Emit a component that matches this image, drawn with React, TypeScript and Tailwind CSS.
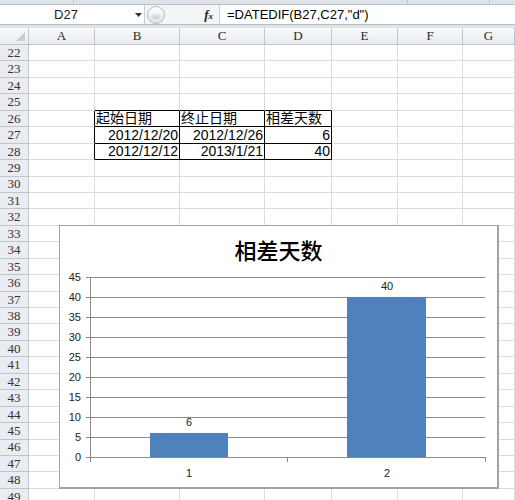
import React from "react";

const cols = [
  { key: "A", w: "w-[66px]" },
  { key: "B", w: "w-[85px]" },
  { key: "C", w: "w-[85px]" },
  { key: "D", w: "w-[67px]" },
  { key: "E", w: "w-[66px]" },
  { key: "F", w: "w-[65px]" },
  { key: "G", w: "flex-1" },
];

const rows = Array.from({ length: 28 }, (_, i) => 22 + i);

const cells: Record<string, { text: string; align: "left" | "right" }> = {
  B26: { text: "起始日期", align: "left" },
  C26: { text: "终止日期", align: "left" },
  D26: { text: "相差天数", align: "left" },
  B27: { text: "2012/12/20", align: "right" },
  C27: { text: "2012/12/26", align: "right" },
  D27: { text: "6", align: "right" },
  B28: { text: "2012/12/12", align: "right" },
  C28: { text: "2013/1/21", align: "right" },
  D28: { text: "40", align: "right" },
};

const inTable = (c: string, r: number) => ["B", "C", "D"].includes(c) && r >= 26 && r <= 28;

const FormulaBar: React.FC = () => (
  <div className="bg-[#dfe3e8]">
    <div className="h-[5px] flex border-b border-[#b8bec6]">
      <div className="w-[74px] border-r border-[#c3c8ce]" />
      <div className="w-[334px] border-r border-[#c3c8ce]" />
      <div className="w-[82px] border-r border-[#c3c8ce]" />
    </div>
    <div className="h-[20px] flex items-center bg-white border-b border-[#b8bec6]">
      <div className="w-[132px] text-center text-[13px] text-[#1e1e1e]">D27</div>
      <div className="w-[12px] flex justify-center">
        <svg width="7" height="4" viewBox="0 0 7 4">
          <path d="M0 0 H7 L3.5 4 Z" fill="#333" />
        </svg>
      </div>
      <div className="w-[75px] h-full flex items-center bg-[#f4f5f7] border-l border-[#c9cdd2] relative">
        <div className="ml-[2px] w-[18px] h-[18px] rounded-full border border-[#b3b8be] bg-gradient-to-b from-white to-[#dde1e6] flex items-center justify-center">
          <div className="w-[8px] h-[8px] rounded-full bg-gradient-to-b from-white to-[#c7ccd2]" />
        </div>
        <span className="ml-auto mr-[6px] italic text-[13px] text-[#222] font-['Liberation_Serif',serif] font-bold">
          f<span className="text-[9px]">x</span>
        </span>
      </div>
      <div className="flex-1 h-full flex items-center border-l border-[#c9cdd2] pl-[7px] text-[13px] text-black">
        =DATEDIF(B27,C27,"d")
      </div>
    </div>
    <div className="h-[3px]" />
  </div>
);

const Chart: React.FC = () => {
  const y = (v: number) => 232 - v * 4;
  const ticks = [0, 5, 10, 15, 20, 25, 30, 35, 40, 45];
  return (
    <div className="absolute left-[59px] top-[225px] w-[440px] h-[264px] bg-white border border-[#a3a3a3] border-r-2 border-b-2">
      <div className="absolute left-0 right-0 top-[8px] text-center text-[22px] leading-[30px] text-black font-['Noto_Sans_CJK_SC',sans-serif] font-medium">
        相差天数
      </div>
      <svg className="absolute left-[-1px] top-[-1px]" width="440" height="264" viewBox="0 0 440 264">
        {ticks.map((t) => (
          <g key={t}>
            {t > 0 && <line x1="31" x2="426" y1={y(t) + 0.5} y2={y(t) + 0.5} stroke="#8c8c8c" strokeWidth="1" />}
            <line x1="27" x2="31" y1={y(t) + 0.5} y2={y(t) + 0.5} stroke="#8c8c8c" strokeWidth="1" />
            <text x="22" y={y(t) + 4} textAnchor="end" fontSize="11" fontFamily="Liberation Sans, sans-serif" fill="#222">
              {t}
            </text>
          </g>
        ))}
        <line x1="31.5" x2="31.5" y1="52" y2="233" stroke="#8c8c8c" />
        <line x1="31" x2="427" y1="232.5" y2="232.5" stroke="#8c8c8c" />
        {[31.5, 228.5, 426.5].map((x) => (
          <line key={x} x1={x} x2={x} y1="232" y2="237" stroke="#8c8c8c" />
        ))}
        <rect x="91" y={y(6)} width="78" height={6 * 4} fill="#4f81bd" />
        <rect x="288" y={y(40)} width="79" height={40 * 4} fill="#4f81bd" />
        <text x="130" y="201" textAnchor="middle" fontSize="11" fontFamily="Liberation Sans, sans-serif" fill="#222">6</text>
        <text x="328" y="65" textAnchor="middle" fontSize="11" fontFamily="Liberation Sans, sans-serif" fill="#222">40</text>
        <text x="130" y="252" textAnchor="middle" fontSize="11" fontFamily="Liberation Sans, sans-serif" fill="#222">1</text>
        <text x="328" y="252" textAnchor="middle" fontSize="11" fontFamily="Liberation Sans, sans-serif" fill="#222">2</text>
      </svg>
    </div>
  );
};

const App: React.FC = () => {
  return (
    <div className="w-[515px] h-[500px] overflow-hidden bg-white relative font-['Liberation_Sans','Noto_Sans_CJK_SC',sans-serif]">
      <FormulaBar />
      {/* column headers */}
      <div className="flex h-[17px] bg-gradient-to-b from-[#f9fafb] to-[#e8ebef] border-b border-[#c0c5cc]">
        <div className="w-[29px] border-r border-[#c0c5cc] relative">
          <svg className="absolute right-[3px] bottom-[3px]" width="9" height="9" viewBox="0 0 9 9">
            <path d="M9 0 V9 H0 Z" fill="#c9ced4" />
          </svg>
        </div>
        {cols.map((c) => (
          <div
            key={c.key}
            className={`${c.w} shrink-0 border-r border-[#c0c5cc] flex items-center justify-center text-[13px] text-[#2b2b2b] font-['Liberation_Serif',serif]`}
          >
            {c.key}
          </div>
        ))}
      </div>
      {/* rows */}
      {rows.map((r) => (
        <div key={r} className="flex h-[16.44px]">
          <div className="w-[29px] shrink-0 bg-[#e9ecf0] border-r border-b border-[#c0c5cc] flex items-center justify-center text-[13px] text-[#333] font-['Liberation_Serif',serif]">
            {r}
          </div>
          {cols.map((c) => {
            const id = `${c.key}${r}`;
            const cell = cells[id];
            const black =
              inTable(c.key, r) ||
              (c.key === "A" && r >= 26 && r <= 28);
            const blackBottom = inTable(c.key, r) || (["B", "C", "D"].includes(c.key) && r === 25);
            return (
              <div
                key={id}
                className={`${c.w} shrink-0 border-r border-b ${black ? "border-r-black" : "border-r-[#dadcdf]"} ${
                  blackBottom ? "border-b-black" : "border-b-[#dadcdf]"
                } flex items-center overflow-hidden whitespace-nowrap text-[14px] leading-[16px] text-black ${
                  cell?.align === "right" ? "justify-end pr-[1px]" : "justify-start pl-[1px]"
                }`}
              >
                {cell?.text}
              </div>
            );
          })}
        </div>
      ))}
      <Chart />
    </div>
  );
};

export default App;
